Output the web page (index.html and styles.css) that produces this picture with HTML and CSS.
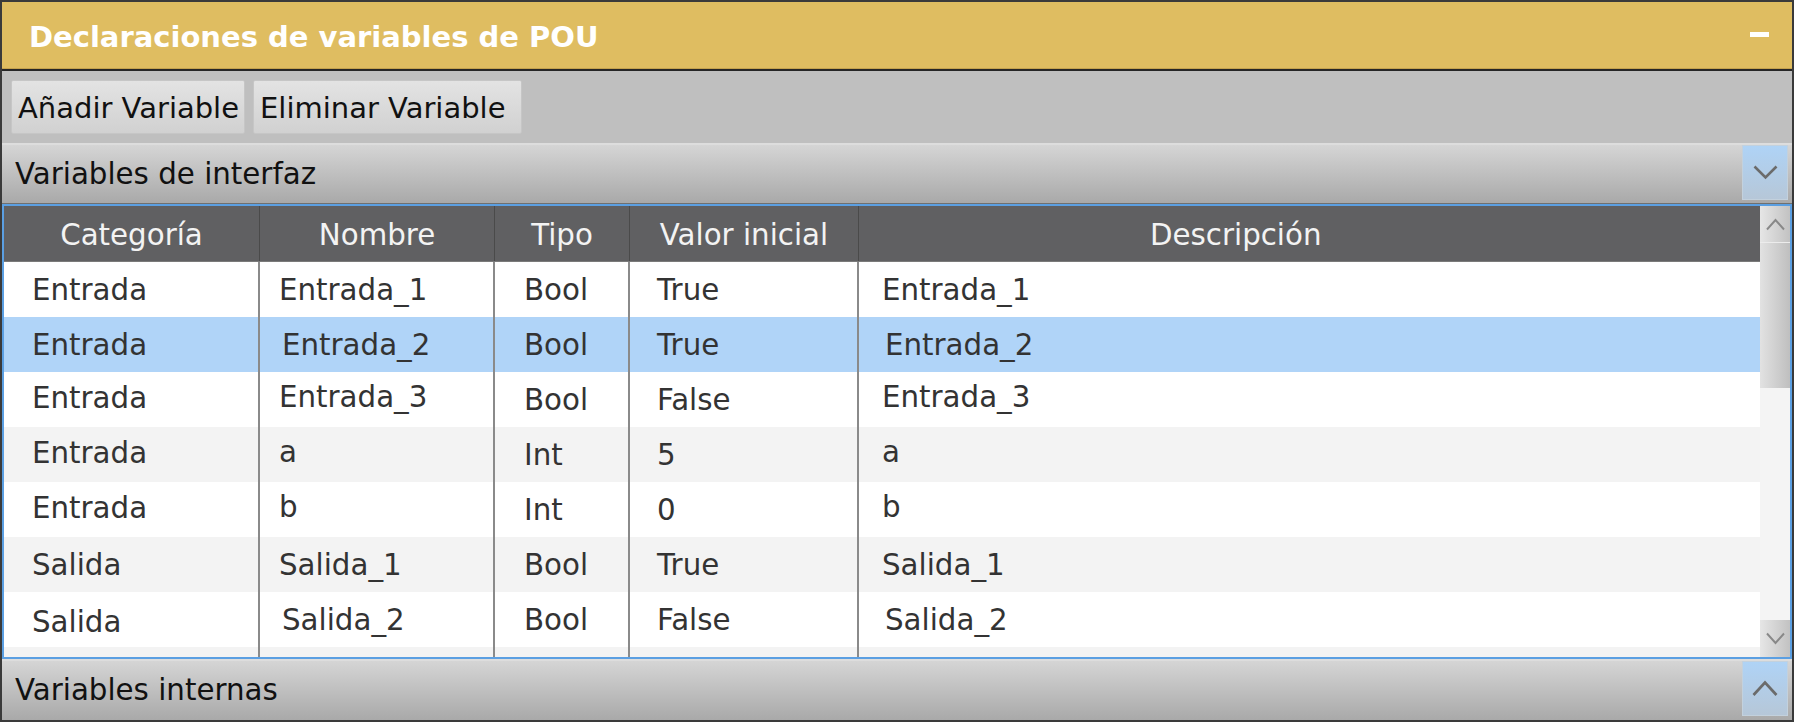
FILE: index.html
```html
<!DOCTYPE html>
<html lang="es">
<head>
<meta charset="utf-8">
<title>Declaraciones de variables de POU</title>
<link rel="stylesheet" href="styles.css">
</head>
<body>
<div class="panel">
  <div class="titlebar">
    <span class="title">Declaraciones de variables de POU</span>
    <span class="minimize"></span>
  </div>
  <div class="toolbar">
    <button class="btn">Añadir Variable</button>
    <button class="btn btn-wide">Eliminar Variable</button>
  </div>
  <div class="section-head">
    <span class="section-title">Variables de interfaz</span>
    <span class="toggle">
      <svg width="25" height="15" viewBox="0 0 25 15"><polyline points="1.5,1.5 12.5,12.5 23.5,1.5" fill="none" stroke="#6b6b6b" stroke-width="2.6"/></svg>
    </span>
  </div>
  <div class="table-wrap">
    <div class="table">
      <div class="row head">
        <div class="cell c">Categoría</div>
        <div class="cell c">Nombre</div>
        <div class="cell c">Tipo</div>
        <div class="cell c">Valor inicial</div>
        <div class="cell desc-h">Descripción</div>
      </div>
      <div class="row odd">
        <div class="cell p1">Entrada</div>
        <div class="cell p2">Entrada_1</div>
        <div class="cell p3">Bool</div>
        <div class="cell p4">True</div>
        <div class="cell p5">Entrada_1</div>
      </div>
      <div class="row sel">
        <div class="cell p1">Entrada</div>
        <div class="cell p2 sh">Entrada_2</div>
        <div class="cell p3">Bool</div>
        <div class="cell p4">True</div>
        <div class="cell p5 sh">Entrada_2</div>
      </div>
      <div class="row odd">
        <div class="cell p1 up1">Entrada</div>
        <div class="cell p2 up">Entrada_3</div>
        <div class="cell p3">Bool</div>
        <div class="cell p4">False</div>
        <div class="cell p5 up">Entrada_3</div>
      </div>
      <div class="row even">
        <div class="cell p1 up1">Entrada</div>
        <div class="cell p2 up">a</div>
        <div class="cell p3">Int</div>
        <div class="cell p4">5</div>
        <div class="cell p5 up">a</div>
      </div>
      <div class="row odd">
        <div class="cell p1 up1">Entrada</div>
        <div class="cell p2 up">b</div>
        <div class="cell p3">Int</div>
        <div class="cell p4">0</div>
        <div class="cell p5 up">b</div>
      </div>
      <div class="row even">
        <div class="cell p1">Salida</div>
        <div class="cell p2">Salida_1</div>
        <div class="cell p3">Bool</div>
        <div class="cell p4">True</div>
        <div class="cell p5">Salida_1</div>
      </div>
      <div class="row odd">
        <div class="cell p1 dn">Salida</div>
        <div class="cell p2 sh">Salida_2</div>
        <div class="cell p3">Bool</div>
        <div class="cell p4">False</div>
        <div class="cell p5 sh">Salida_2</div>
      </div>
      <div class="row even">
        <div class="cell"></div>
        <div class="cell"></div>
        <div class="cell"></div>
        <div class="cell"></div>
        <div class="cell"></div>
      </div>
    </div>
    <div class="scrollbar">
      <div class="sb-btn">
        <svg width="19" height="13" viewBox="0 0 19 13"><polyline points="1,11.5 9.5,2 18,11.5" fill="none" stroke="#888888" stroke-width="1.9"/></svg>
      </div>
      <div class="sb-thumb"></div>
      <div class="sb-track"></div>
      <div class="sb-btn">
        <svg width="19" height="13" viewBox="0 0 19 13"><polyline points="1,1.5 9.5,11 18,1.5" fill="none" stroke="#888888" stroke-width="1.9"/></svg>
      </div>
    </div>
  </div>
  <div class="section-head last">
    <span class="section-title">Variables internas</span>
    <span class="toggle">
      <svg width="26" height="17" viewBox="0 0 26 17"><polyline points="1.5,15 13,2.5 24.5,15" fill="none" stroke="#6b6b6b" stroke-width="2.7"/></svg>
    </span>
  </div>
</div>
</body>
</html>
```

FILE: styles.css
```css
* { box-sizing: border-box; }

html, body {
  margin: 0;
  padding: 0;
  background: #ffffff;
}

body {
  font-family: "DejaVu Sans", "Liberation Sans", sans-serif;
  font-size: 29.3px;
}

.panel {
  width: 1794px;
  height: 722px;
  border: 2px solid #3a3a3a;
  display: flex;
  flex-direction: column;
  overflow: hidden;
  background: #bfbfbf;
}

.titlebar {
  height: 69px;
  flex: none;
  background: #dfbd61;
  border-bottom: 2px solid #262626;
  box-shadow: inset 0 -1px 0 #c4a24e;
  display: flex;
  align-items: center;
  justify-content: space-between;
  padding: 0 23px 0 27px;
}

.title {
  color: #ffffff;
  font-weight: bold;
  font-size: 29px;
  margin-top: 3px;
}

.minimize {
  width: 19px;
  height: 5px;
  background: #ffffff;
  margin-top: -2px;
}

.toolbar {
  height: 72px;
  flex: none;
  background: #bfbfbf;
  display: flex;
  align-items: flex-start;
  gap: 8px;
  padding: 9px 0 0 9px;
}

.btn {
  height: 54px;
  font-family: "DejaVu Sans", "Liberation Sans", sans-serif;
  font-size: 29px;
  color: #111111;
  background: linear-gradient(#e3e3e3, #d1d1d1);
  border: 1px solid #c6c6c6;
  border-radius: 2px;
  padding: 2px 5px 0 6px;
}

.btn-wide {
  padding-right: 16px;
}

.section-head {
  height: 61px;
  flex: none;
  background: linear-gradient(#d5d5d5, #a9a9a9);
  border-top: 2px solid #dddddd;
  border-bottom: 1px solid #707070;
  display: flex;
  align-items: stretch;
  justify-content: space-between;
  padding-left: 13px;
}

.section-head.last {
  border-bottom: none;
  height: 61px;
}

.section-title {
  align-self: center;
  color: #111111;
  margin-top: 0;
}

.section-head.last .section-title {
  margin-top: -2px;
}

.toggle {
  width: 46px;
  margin: 0 4px 3px 0;
  background: linear-gradient(#afd3f6, #b6c7d8);
  border: 1px solid #c3d1dd;
  display: flex;
  align-items: center;
  justify-content: center;
}

.section-head.last .toggle {
  margin-bottom: 4px;
}

.table-wrap {
  height: 455px;
  flex: none;
  border: 2px solid #5b9fe2;
  display: flex;
  background: #f3f3f3;
}

.table {
  flex: 1;
  overflow: hidden;
  display: flex;
  flex-direction: column;
}

.row {
  display: grid;
  grid-template-columns: 256px 235px 135px 229px 1fr;
  height: 55px;
  flex: none;
  color: #333333;
}

.row.odd { background: #ffffff; }
.row.even { background: #f3f3f3; }
.row.sel { background: #b0d4f8; }

.row.head {
  height: 56px;
  background: #606062;
  color: #f3f3f3;
  border-bottom: 1px solid #7a7a7a;
}

.cell {
  display: flex;
  align-items: center;
  white-space: nowrap;
  border-right: 2px solid #8a8a8a;
  padding-top: 1px;
}

.cell:last-child { border-right: none; }

.head .cell {
  border-right: 1px solid #4a4a4a;
  justify-content: center;
  padding-top: 3px;
  padding-bottom: 0;
}

.head .cell.desc-h {
  border-right: none;
  justify-content: flex-start;
  padding-left: 291px;
}

.p1 { padding-left: 28px; }
.p2 { padding-left: 19px; }
.p3 { padding-left: 29px; }
.p4 { padding-left: 27px; }
.p5 { padding-left: 23px; }

.sh { padding-left: 22px; }
.p5.sh { padding-left: 26px; }

.up { padding-bottom: 7px; }
.up1 { padding-bottom: 4px; }
.dn { padding-top: 4px; }

.scrollbar {
  width: 30px;
  flex: none;
  display: flex;
  flex-direction: column;
  background: #f4f4f4;
}

.sb-btn {
  height: 36px;
  flex: none;
  background: linear-gradient(90deg, #e6e6e6, #c2c2c2);
  display: flex;
  align-items: center;
  justify-content: center;
}

.sb-thumb {
  height: 146px;
  flex: none;
  background: linear-gradient(90deg, #e2e2e2, #bfbfbf);
  border-top: 1px solid #ececec;
}

.sb-track {
  flex: 1;
  background: #f4f4f4;
}

.scrollbar .sb-btn:last-child {
  height: 37px;
}
```
